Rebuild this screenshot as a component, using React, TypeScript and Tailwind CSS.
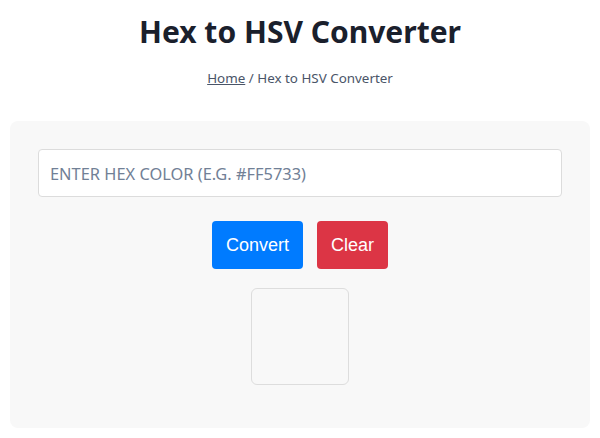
export default function App() {
  return (
    <main className="min-h-screen bg-white px-[10px] pt-[12px] font-['Noto_Sans',sans-serif]">
      <h1 className="text-center text-[30px] font-bold leading-[40px] text-[#1a202c]">Hex to HSV Converter</h1>
      <nav className="mt-[16px] text-center text-[13.4px] leading-[20px] text-[#4a5568]">
        <a href="#" className="underline">Home</a> / Hex to HSV Converter
      </nav>
      <section className="mt-[33px] rounded-lg bg-[#f8f8f8] px-[28px] pt-[28px] pb-[43px]">
        <input
          type="text"
          placeholder="ENTER HEX COLOR (E.G. #FF5733)"
          className="block h-[48px] w-full rounded border border-[#dcdcdc] bg-white px-[11px] text-[16.4px] text-[#1a202c] placeholder:text-[#718096] outline-none"
        />
        <div className="mt-[24px] flex justify-center gap-[14px] font-['Liberation_Sans',sans-serif]">
          <button className="h-[48px] w-[91px] rounded bg-[#007bff] text-[18px] text-white">Convert</button>
          <button className="h-[48px] w-[71px] rounded bg-[#dc3545] text-[18px] text-white">Clear</button>
        </div>
        <div className="mt-[19px] flex justify-center">
          <div className="h-[97px] w-[98px] rounded-md border border-[#dddddd]"></div>
        </div>
      </section>
    </main>
  );
}
